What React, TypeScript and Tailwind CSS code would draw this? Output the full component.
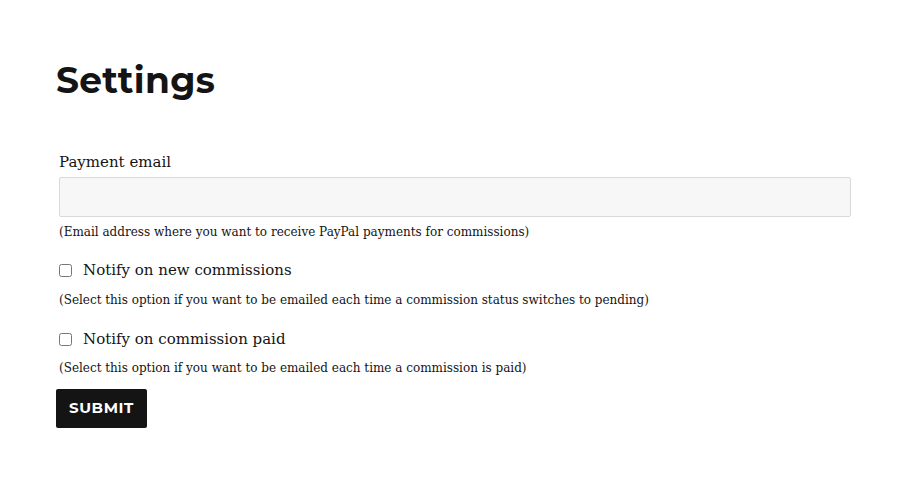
export default function App() {
  return (
    <div className="min-h-screen bg-white px-[56px] pt-[58px]">
      <h1 className="font-['Montserrat','Inter',sans-serif] text-[36px] font-bold leading-[44px] tracking-[0.3px] text-[#141414]">
        Settings
      </h1>

      <form className="mt-[48px] flex flex-col pl-[3px] font-['DejaVu_Serif',serif] text-[#141414]">
        <label htmlFor="payment-email" className="text-[15px] leading-[24px]">
          Payment email
        </label>
        <input
          id="payment-email"
          type="email"
          className="mt-[3px] h-[40px] w-[792px] rounded-[2px] border border-[#d9d9d9] bg-[#f7f7f7] px-3 outline-none"
        />
        <p className="mt-[6px] text-[12px] leading-[18px]">
          (Email address where you want to receive PayPal payments for commissions)
        </p>

        <label className="mt-[17px] flex items-center gap-[11px] text-[15px] leading-[24px]">
          <input type="checkbox" className="h-[13px] w-[13px] accent-[#888]" />
          Notify on new commissions
        </label>
        <p className="mt-[9px] text-[12px] leading-[18px]">
          (Select this option if you want to be emailed each time a commission status switches to pending)
        </p>

        <label className="mt-[18px] flex items-center gap-[11px] text-[15px] leading-[24px]">
          <input type="checkbox" className="h-[13px] w-[13px] accent-[#888]" />
          Notify on commission paid
        </label>
        <p className="mt-[8px] text-[12px] leading-[18px]">
          (Select this option if you want to be emailed each time a commission is paid)
        </p>

        <div className="mt-[12px] -ml-[3px]">
          <button
            type="submit"
            className="h-[39px] rounded-[2px] bg-[#141414] px-[13px] font-['Montserrat','Inter',sans-serif] text-[15px] font-bold tracking-[0.6px] text-white"
          >
            SUBMIT
          </button>
        </div>
      </form>
    </div>
  );
}
